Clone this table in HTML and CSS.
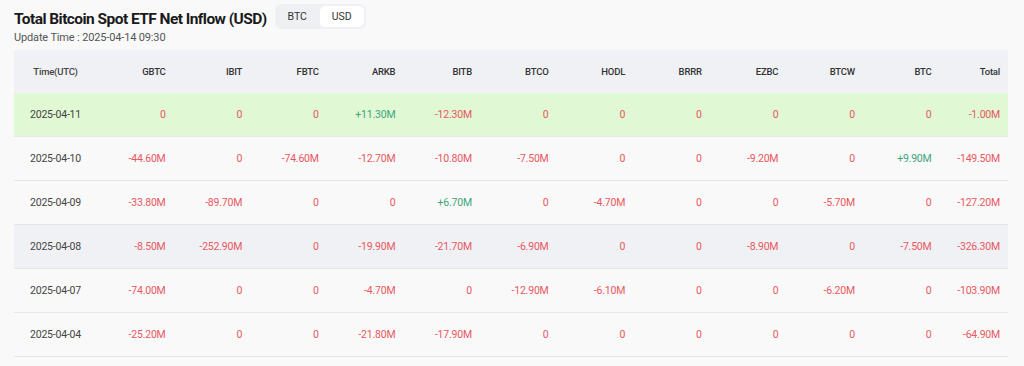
FILE: index.html
```html
<!DOCTYPE html>
<html lang="en">
<head>
<meta charset="utf-8">
<title>Total Bitcoin Spot ETF Net Inflow (USD)</title>
<link rel="stylesheet" href="styles.css">
</head>
<body>
<div class="page">
  <div class="head">
    <h1 class="title">Total Bitcoin Spot ETF Net Inflow (USD)</h1>
    <div class="toggle">
      <span class="seg">BTC</span>
      <span class="seg seg-active">USD</span>
    </div>
  </div>
  <div class="update">Update Time : 2025-04-14 09:30</div>
  <table class="etf">
    <colgroup>
      <col class="c-time">
      <col class="c-num"><col class="c-num"><col class="c-num"><col class="c-num">
      <col class="c-num"><col class="c-num"><col class="c-num"><col class="c-num">
      <col class="c-num"><col class="c-num"><col class="c-num">
      <col>
    </colgroup>
    <thead>
      <tr>
        <th class="time">Time(UTC)</th>
        <th>GBTC</th><th>IBIT</th><th>FBTC</th><th>ARKB</th><th>BITB</th><th>BTCO</th>
        <th>HODL</th><th>BRRR</th><th>EZBC</th><th>BTCW</th><th>BTC</th><th>Total</th>
      </tr>
    </thead>
    <tbody>
      <tr class="row-hl">
        <td class="time">2025-04-11</td>
        <td class="neg">0</td><td class="neg">0</td><td class="neg">0</td><td class="pos">+11.30M</td>
        <td class="neg">-12.30M</td><td class="neg">0</td><td class="neg">0</td><td class="neg">0</td>
        <td class="neg">0</td><td class="neg">0</td><td class="neg">0</td><td class="neg">-1.00M</td>
      </tr>
      <tr>
        <td class="time">2025-04-10</td>
        <td class="neg">-44.60M</td><td class="neg">0</td><td class="neg">-74.60M</td><td class="neg">-12.70M</td>
        <td class="neg">-10.80M</td><td class="neg">-7.50M</td><td class="neg">0</td><td class="neg">0</td>
        <td class="neg">-9.20M</td><td class="neg">0</td><td class="pos">+9.90M</td><td class="neg">-149.50M</td>
      </tr>
      <tr>
        <td class="time">2025-04-09</td>
        <td class="neg">-33.80M</td><td class="neg">-89.70M</td><td class="neg">0</td><td class="neg">0</td>
        <td class="pos">+6.70M</td><td class="neg">0</td><td class="neg">-4.70M</td><td class="neg">0</td>
        <td class="neg">0</td><td class="neg">-5.70M</td><td class="neg">0</td><td class="neg">-127.20M</td>
      </tr>
      <tr class="row-gray">
        <td class="time">2025-04-08</td>
        <td class="neg">-8.50M</td><td class="neg">-252.90M</td><td class="neg">0</td><td class="neg">-19.90M</td>
        <td class="neg">-21.70M</td><td class="neg">-6.90M</td><td class="neg">0</td><td class="neg">0</td>
        <td class="neg">-8.90M</td><td class="neg">0</td><td class="neg">-7.50M</td><td class="neg">-326.30M</td>
      </tr>
      <tr>
        <td class="time">2025-04-07</td>
        <td class="neg">-74.00M</td><td class="neg">0</td><td class="neg">0</td><td class="neg">-4.70M</td>
        <td class="neg">0</td><td class="neg">-12.90M</td><td class="neg">-6.10M</td><td class="neg">0</td>
        <td class="neg">0</td><td class="neg">-6.20M</td><td class="neg">0</td><td class="neg">-103.90M</td>
      </tr>
      <tr>
        <td class="time">2025-04-04</td>
        <td class="neg">-25.20M</td><td class="neg">0</td><td class="neg">0</td><td class="neg">-21.80M</td>
        <td class="neg">-17.90M</td><td class="neg">0</td><td class="neg">0</td><td class="neg">0</td>
        <td class="neg">0</td><td class="neg">0</td><td class="neg">0</td><td class="neg">-64.90M</td>
      </tr>
    </tbody>
  </table>
</div>
</body>
</html>
```

FILE: styles.css
```css
html, body {
  margin: 0;
  padding: 0;
  background: #f9f9f9;
}

body {
  font-family: Roboto, "Liberation Sans", Arial, sans-serif;
  color: #333;
}

.page {
  padding: 4px 16px 0 14px;
}

.head {
  display: flex;
  align-items: center;
  gap: 8px;
  height: 25px;
}

.title {
  margin: 4px 0 0;
  font-size: 15.5px;
  font-weight: 700;
  letter-spacing: -0.55px;
  color: #1a1a1a;
  line-height: 18px;
}

.toggle {
  display: flex;
  align-items: center;
  height: 25px;
  padding: 0 2px 0 0;
  background: #eef0f3;
  border-radius: 6px;
  box-sizing: border-box;
}

.seg {
  display: flex;
  align-items: center;
  justify-content: center;
  width: 45px;
  height: 21px;
  font-size: 10.5px;
  color: #333;
  border-radius: 5px;
}

.seg-active {
  width: 44px;
  background: #ffffff;
}

.update {
  margin-top: 2px;
  font-size: 11px;
  letter-spacing: -0.15px;
  line-height: 14px;
  color: #555;
}

.etf {
  margin-top: 5px;
  width: 994px;
  table-layout: fixed;
  border-collapse: collapse;
}

.c-time { width: 83px; }
.c-num { width: 76.6px; }

.etf th {
  height: 43px;
  padding: 0 8px 0 0;
  background: #eff1f5;
  font-size: 9.5px;
  font-weight: 500;
  letter-spacing: -0.2px;
  color: #333;
  text-align: right;
  white-space: nowrap;
}

.etf td {
  height: 43px;
  padding: 0 8px 0 0;
  font-size: 10.5px;
  letter-spacing: -0.2px;
  text-align: right;
  white-space: nowrap;
  border-bottom: 1px solid #e6e6e6;
}

.etf .time {
  text-align: center;
  padding: 0;
  color: #444;
}

.row-hl td {
  background: #e0f8d4;
}

.row-gray td {
  background: #f0f1f5;
}

.neg { color: #e8575f; }
.pos { color: #3ea57d; }
```
